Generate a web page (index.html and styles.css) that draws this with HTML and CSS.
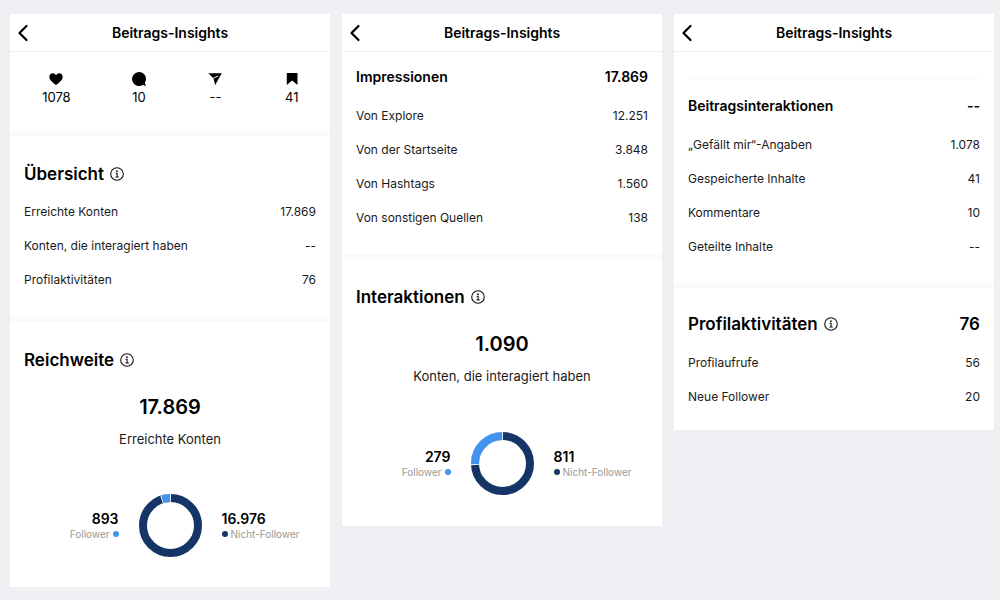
FILE: index.html
```html
<!DOCTYPE html>
<html lang="de">
<head>
<meta charset="utf-8">
<meta name="viewport" content="width=device-width, initial-scale=1">
<title>Beitrags-Insights</title>
<link rel="stylesheet" href="styles.css">
</head>
<body>
<svg class="defs" aria-hidden="true">
  <symbol id="back" viewBox="0 0 12 18"><path d="M9.500 2 2.500 9l7 7" fill="none" stroke="#000" stroke-width="2.200" stroke-linecap="round" stroke-linejoin="round"/></symbol>
  <symbol id="info" viewBox="0 0 14 14"><circle cx="7" cy="7" r="6.300" fill="none" stroke="#111" stroke-width="1.100"/><circle cx="6.900" cy="4.200" r=".9" fill="#111"/><path d="M5.600 6.300h1.500v3.500M5.400 10h3.400" fill="none" stroke="#111" stroke-width="1.100"/></symbol>
</svg>
<main class="board">
  <section class="panel">
    <header class="bar">
      <button class="back" type="button" aria-label="Zurück"><svg class="back-icon"><use href="#back"/></svg></button>
      <h1 class="bar-title">Beitrags-Insights</h1>
    </header>
    <ul class="stats">
      <li class="stat"><svg class="stat-icon" viewBox="0 0 16 16" role="img" aria-label="Gefällt mir"><path d="M8 14C6.200 12.400 1.300 9.300 1.300 5.900 1.300 3.800 2.800 2.200 4.700 2.200 6.100 2.200 7.300 3 8 4.200 8.700 3 9.900 2.200 11.300 2.200c1.900 0 3.400 1.600 3.400 3.700C14.700 9.300 9.800 12.400 8 14z"/></svg>1078</li>
      <li class="stat"><svg class="stat-icon" viewBox="0 0 16 16" role="img" aria-label="Kommentare"><path d="M8 1a7 7 0 1 0 3.700 13l3.100.9-.9-3.200A7 7 0 0 0 8 1z"/></svg>10</li>
      <li class="stat"><svg class="stat-icon" viewBox="0 0 16 16" role="img" aria-label="Geteilt"><path d="M1.300 2.300h13.500L8.200 14.100 6.500 7.400z"/><path d="M6.300 7.300l4.900-2.500" stroke="#fff" stroke-width="1"/></svg>--</li>
      <li class="stat"><svg class="stat-icon" viewBox="0 0 16 16" role="img" aria-label="Gespeichert"><path d="M2.800 2h10.700v12L8.150 9.600 2.800 14z"/></svg>41</li>
    </ul>
    <section class="block">
      <h2 class="title">Übersicht <svg class="info"><use href="#info"/></svg></h2>
      <dl class="rows">
        <div class="row"><dt>Erreichte Konten</dt><dd>17.869</dd></div>
        <div class="row"><dt>Konten, die interagiert haben</dt><dd>--</dd></div>
        <div class="row"><dt>Profilaktivitäten</dt><dd>76</dd></div>
      </dl>
    </section>
    <section class="block chart-block">
      <h2 class="title">Reichweite <svg class="info"><use href="#info"/></svg></h2>
      <p class="total">17.869</p>
      <p class="caption">Erreichte Konten</p>
      <div class="chart">
        <div class="side side-left"><strong>893</strong><span class="key">Follower <i class="dot light"></i></span></div>
        <svg class="donut" viewBox="0 0 63 63" role="img" aria-label="893 Follower, 16.976 Nicht-Follower"><g transform="rotate(-90 31.500 31.500)" fill="none" stroke-width="8"><circle cx="31.500" cy="31.500" r="27.500" stroke="#143566"/><circle cx="31.500" cy="31.500" r="27.500" stroke="#fff" pathLength="100" stroke-dasharray="5.600 94.400" stroke-dashoffset="-94.700"/><circle cx="31.500" cy="31.500" r="27.500" stroke="#4193ef" pathLength="100" stroke-dasharray="4.600 95.400" stroke-dashoffset="-95.200"/></g></svg>
        <div class="side"><strong>16.976</strong><span class="key"><i class="dot dark"></i> Nicht-Follower</span></div>
      </div>
    </section>
  </section>

  <section class="panel">
    <header class="bar">
      <button class="back" type="button" aria-label="Zurück"><svg class="back-icon"><use href="#back"/></svg></button>
      <h1 class="bar-title">Beitrags-Insights</h1>
    </header>
    <section class="group">
      <h2 class="subtitle">Impressionen <span>17.869</span></h2>
      <dl class="rows">
        <div class="row"><dt>Von Explore</dt><dd>12.251</dd></div>
        <div class="row"><dt>Von der Startseite</dt><dd>3.848</dd></div>
        <div class="row"><dt>Von Hashtags</dt><dd>1.560</dd></div>
        <div class="row"><dt>Von sonstigen Quellen</dt><dd>138</dd></div>
      </dl>
    </section>
    <section class="block chart-block roomy">
      <h2 class="title">Interaktionen <svg class="info"><use href="#info"/></svg></h2>
      <p class="total">1.090</p>
      <p class="caption">Konten, die interagiert haben</p>
      <div class="chart">
        <div class="side side-left"><strong>279</strong><span class="key">Follower <i class="dot light"></i></span></div>
        <svg class="donut" viewBox="0 0 63 63" role="img" aria-label="279 Follower, 811 Nicht-Follower"><g transform="rotate(-90 31.500 31.500)" fill="none" stroke-width="8"><circle cx="31.500" cy="31.500" r="27.500" stroke="#143566"/><circle cx="31.500" cy="31.500" r="27.500" stroke="#fff" pathLength="100" stroke-dasharray="26.200 73.800" stroke-dashoffset="-74.100"/><circle cx="31.500" cy="31.500" r="27.500" stroke="#4193ef" pathLength="100" stroke-dasharray="25.200 74.800" stroke-dashoffset="-74.600"/></g></svg>
        <div class="side"><strong>811</strong><span class="key"><i class="dot dark"></i> Nicht-Follower</span></div>
      </div>
    </section>
  </section>

  <section class="panel">
    <header class="bar">
      <button class="back" type="button" aria-label="Zurück"><svg class="back-icon"><use href="#back"/></svg></button>
      <h1 class="bar-title">Beitrags-Insights</h1>
    </header>
    <section class="group continued">
      <h2 class="subtitle">Beitragsinteraktionen <span>--</span></h2>
      <dl class="rows">
        <div class="row"><dt>„Gefällt mir“-Angaben</dt><dd>1.078</dd></div>
        <div class="row"><dt>Gespeicherte Inhalte</dt><dd>41</dd></div>
        <div class="row"><dt>Kommentare</dt><dd>10</dd></div>
        <div class="row"><dt>Geteilte Inhalte</dt><dd>--</dd></div>
      </dl>
    </section>
    <section class="block last">
      <h2 class="title">Profilaktivitäten <svg class="info"><use href="#info"/></svg><span class="title-value">76</span></h2>
      <dl class="rows">
        <div class="row"><dt>Profilaufrufe</dt><dd>56</dd></div>
        <div class="row"><dt>Neue Follower</dt><dd>20</dd></div>
      </dl>
    </section>
  </section>
</main>
</body>
</html>
```

FILE: styles.css
```css
* { box-sizing: border-box; }
body {
  margin: 0;
  background: #eff0f3;
  color: #000;
  font-family: Inter, "Liberation Sans", sans-serif;
}
h1, h2, p, ul, dl, dd { margin: 0; padding: 0; }
.defs { display: none; }
.board {
  display: grid;
  grid-template-columns: repeat(3, minmax(0, 1fr));
  align-items: start;
  gap: 12px;
  padding: 14px 6px 12px 10px;
}
.panel { background: #fff; }
.bar {
  display: grid;
  grid-template-columns: 26px 1fr 26px;
  align-items: center;
  height: 38px;
  border-bottom: 1px solid #efefef;
}
.back {
  display: flex;
  justify-content: center;
  padding: 0;
  border: 0;
  background: none;
}
.back-icon { width: 12px; height: 18px; }
.bar-title {
  text-align: center;
  font-size: 14px;
  line-height: 20px;
  font-weight: 600;
}
.stats {
  display: flex;
  justify-content: space-around;
  padding: 19px 0 24px 2px;
  list-style: none;
}
.stat {
  display: flex;
  flex-direction: column;
  align-items: center;
  font-size: 13px;
  line-height: 20px;
}
.stat-icon { width: 16px; height: 16px; }
.block {
  padding: 26px 14px 20px;
  border-top: 5px solid #fafafa;
}
.title {
  display: flex;
  align-items: center;
  gap: 6px;
  margin-bottom: 9px;
  font-size: 17px;
  line-height: 24px;
  font-weight: 600;
}
.title-value { margin-left: auto; }
.info { width: 14px; height: 14px; }
.group { padding: 15px 14px 19px; }
.subtitle {
  display: flex;
  justify-content: space-between;
  margin-bottom: 12px;
  font-size: 14px;
  line-height: 20px;
  font-weight: 600;
}
.row {
  display: flex;
  justify-content: space-between;
  font-size: 12px;
  line-height: 34px;
  color: #1a1a1a;
}
.chart-block { padding-bottom: 30px; }
.total {
  margin-top: 21px;
  text-align: center;
  font-size: 20px;
  line-height: 28px;
  font-weight: 600;
}
.caption {
  margin: 8px 0 45px;
  text-align: center;
  font-size: 13px;
  line-height: 20px;
  color: #1a1a1a;
}
.roomy { padding-bottom: 31px; }
.roomy .caption { margin-bottom: 46px; }
.chart {
  display: grid;
  grid-template-columns: 1fr 63px 1fr;
  align-items: center;
  gap: 20px;
}
.donut { display: block; width: 63px; height: 63px; }
.side {
  display: flex;
  flex-direction: column;
  font-size: 14px;
  line-height: 16px;
}
.side strong { font-weight: 600; }
.side-left { align-items: flex-end; }
.key {
  display: flex;
  align-items: center;
  gap: 3px;
  font-size: 10px;
  line-height: 14px;
  color: #999;
}
.dot { width: 6px; height: 6px; border-radius: 50%; }
.light { background: #4193ef; }
.dark { background: #143566; }
.continued { padding-top: 27px; }
.continued::before {
  content: "";
  display: block;
  height: 1px;
  margin-bottom: 16px;
  background: #f9f9f9;
}
.last { padding: 24px 14px 16px; }
.last .title { margin-bottom: 10px; }
```
